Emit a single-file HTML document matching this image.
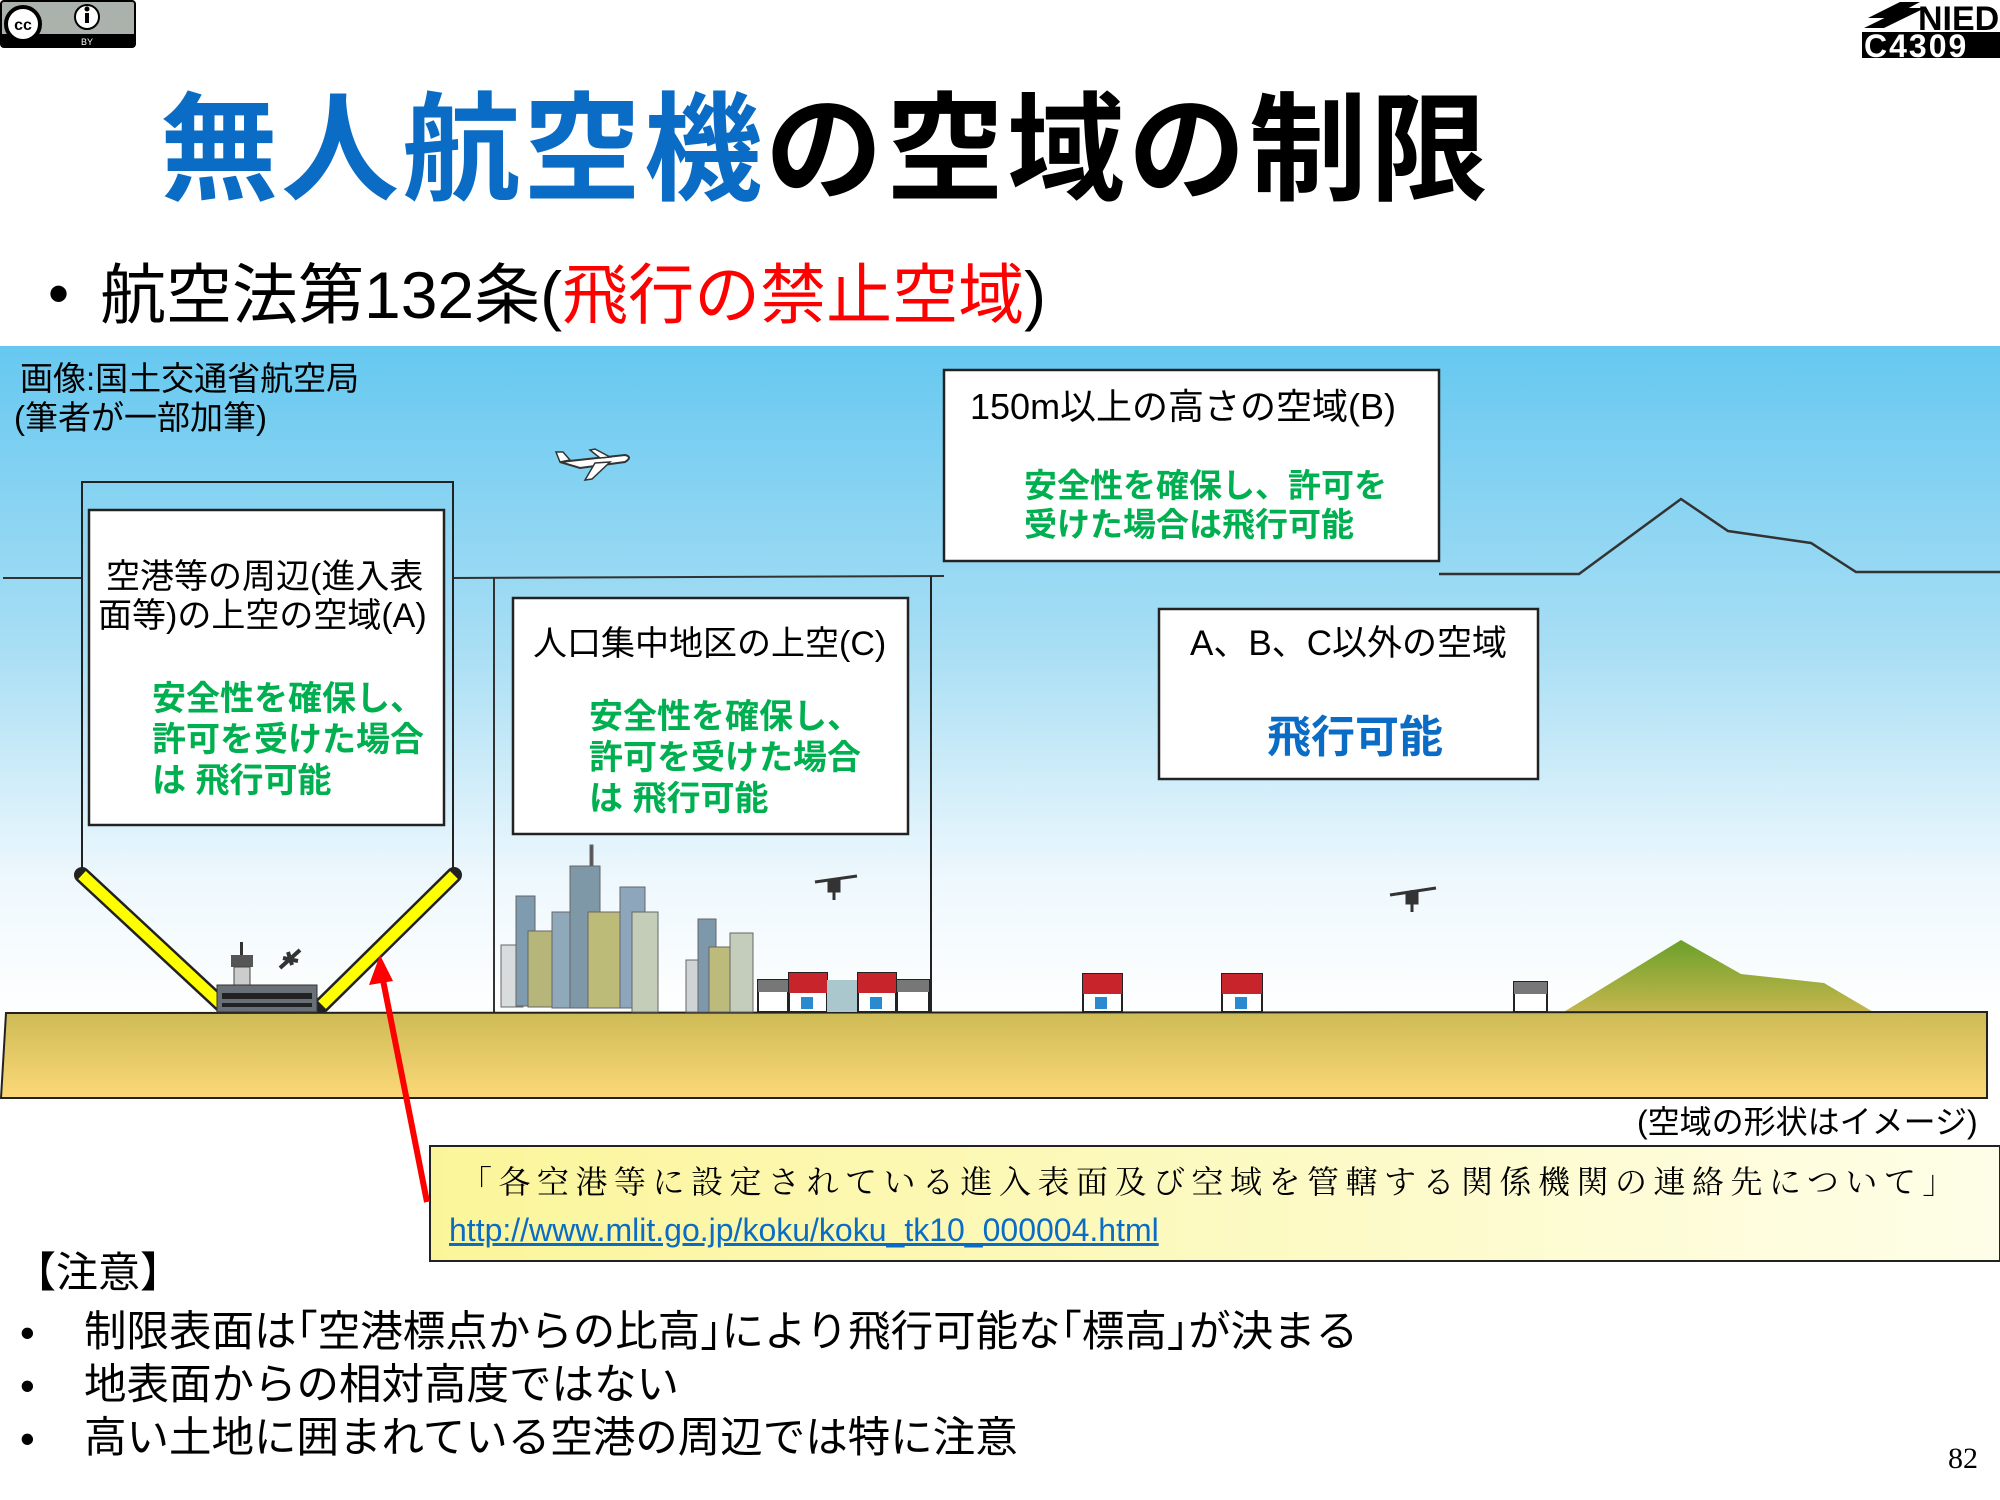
<!DOCTYPE html>
<html><head><meta charset="utf-8">
<style>
*{margin:0;padding:0;box-sizing:border-box}
body{width:2000px;height:1500px;position:relative;background:#fff;overflow:hidden;font-family:"Liberation Sans","Noto Sans CJK JP",sans-serif;color:#000}
.t{position:absolute;white-space:nowrap;line-height:1}
.g{color:#00b050;font-weight:bold}
</style></head><body>
<svg width="2000" height="1500" style="position:absolute;left:0;top:0">
<defs>
<linearGradient id="sky" x1="0" y1="0" x2="0" y2="1">
<stop offset="0" stop-color="#66c8f0"/><stop offset="0.45" stop-color="#a8def4"/><stop offset="0.8" stop-color="#eef8fd"/><stop offset="1" stop-color="#ffffff"/></linearGradient>
<linearGradient id="gr" x1="0" y1="0" x2="0" y2="1"><stop offset="0" stop-color="#cdbb55"/><stop offset="1" stop-color="#fcd878"/></linearGradient>
<linearGradient id="mt" x1="0" y1="0" x2="0" y2="1"><stop offset="0" stop-color="#6aa02a"/><stop offset="1" stop-color="#c7b64e"/></linearGradient>
<linearGradient id="yb" x1="0" y1="0" x2="1" y2="0"><stop offset="0" stop-color="#fbf59a"/><stop offset="1" stop-color="#fefee8"/></linearGradient>
</defs>
<rect x="0" y="346" width="2000" height="668" fill="url(#sky)"/>
<rect x="1" y="1" width="134" height="46" rx="3" fill="#aab2ab" stroke="#000" stroke-width="2"/>
<rect x="1" y="34" width="134" height="13" fill="#000"/>
<circle cx="23" cy="24" r="17" fill="#fff" stroke="#000" stroke-width="4"/>
<text x="23" y="30" font-size="16" font-weight="bold" text-anchor="middle" font-family="Liberation Sans">cc</text>
<circle cx="87" cy="17" r="12" fill="#fff" stroke="#000" stroke-width="2"/>
<rect x="85" y="13" width="4" height="10" fill="#000"/><circle cx="87" cy="9" r="2.5" fill="#000"/>
<text x="87" y="45" font-size="9" fill="#fff" text-anchor="middle" font-family="Liberation Sans">BY</text>
<path d="M1868 18 L1900 2 L1920 2 L1890 18Z M1864 28 L1905 8 L1925 8 L1884 28Z" fill="#000"/>
<text x="1918" y="30" font-size="34" font-weight="bold" font-family="Liberation Sans">NIED</text>
<rect x="1862" y="32" width="138" height="26" fill="#000"/>
<text x="1864" y="57" font-size="32" font-weight="bold" fill="#fff" font-family="Liberation Sans" letter-spacing="2">C4309</text>
<polyline points="3,578 82,578" stroke="#333" stroke-width="2" fill="none"/>
<polyline points="453,578 944,576" stroke="#333" stroke-width="2" fill="none"/>
<polyline points="1439,574 1579,574 1681,499 1728,531 1811,543 1856,572 2000,572" stroke="#333" stroke-width="2.5" fill="none"/>
<polyline points="82,870 82,482 453,482 453,870" stroke="#222" stroke-width="2" fill="none"/>
<rect x="89" y="510" width="355" height="315" fill="#fff" stroke="#222" stroke-width="2.5"/>
<line x1="82" y1="875" x2="222" y2="1005" stroke="#222" stroke-width="16" stroke-linecap="round"/>
<line x1="82" y1="875" x2="222" y2="1005" stroke="#ffff00" stroke-width="11"/>
<line x1="454" y1="875" x2="322" y2="1005" stroke="#222" stroke-width="16" stroke-linecap="round"/>
<line x1="454" y1="875" x2="322" y2="1005" stroke="#ffff00" stroke-width="11"/>
<line x1="494" y1="578" x2="494" y2="1012" stroke="#333" stroke-width="2"/>
<line x1="931" y1="576" x2="931" y2="1012" stroke="#222" stroke-width="2"/>
<rect x="513" y="598" width="395" height="236" fill="#fff" stroke="#222" stroke-width="2.5"/>
<rect x="944" y="370" width="495" height="191" fill="#fff" stroke="#222" stroke-width="2.5"/>
<rect x="1159" y="609" width="379" height="170" fill="#fff" stroke="#222" stroke-width="2.5"/>
<polygon points="1562,1013 1681,940 1741,974 1824,983 1875,1013" fill="url(#mt)"/>
<polygon points="6,1013 1987,1012 1987,1098 1,1098" fill="url(#gr)" stroke="#222" stroke-width="2"/>
<g stroke="#666" stroke-width="1">
<rect x="501" y="945" width="22" height="62" fill="#d8dcdc"/>
<rect x="516" y="896" width="19" height="110" fill="#7e9bb0"/>
<rect x="528" y="931" width="25" height="76" fill="#b7b67a"/>
<rect x="552" y="912" width="28" height="96" fill="#8fa8ba"/>
<rect x="590" y="845" width="3" height="25" fill="#555"/>
<rect x="570" y="866" width="30" height="142" fill="#7f98a8"/>
<rect x="588" y="912" width="32" height="96" fill="#bdbb78"/>
<rect x="620" y="887" width="25" height="121" fill="#8ea6bc"/>
<rect x="632" y="912" width="26" height="100" fill="#c4cdb8"/>
<rect x="686" y="960" width="20" height="52" fill="#cfd3d3"/>
<rect x="698" y="919" width="18" height="93" fill="#7d98ab"/>
<rect x="709" y="947" width="21" height="65" fill="#bcbb7c"/>
<rect x="730" y="933" width="23" height="79" fill="#c4ccbb"/>
</g>
<g>
<rect x="758" y="980" width="30" height="32" fill="#fff" stroke="#222" stroke-width="2"/><rect x="758" y="980" width="30" height="12" fill="#777"/>
<rect x="789" y="973" width="38" height="39" fill="#fff" stroke="#222" stroke-width="2"/><rect x="789" y="973" width="38" height="20" fill="#c8242c"/><rect x="801" y="997" width="12" height="12" fill="#2a8ad0"/>
<rect x="827" y="980" width="31" height="32" fill="#a9c7cc"/>
<rect x="858" y="973" width="38" height="39" fill="#fff" stroke="#222" stroke-width="2"/><rect x="858" y="973" width="38" height="20" fill="#c8242c"/><rect x="870" y="997" width="12" height="12" fill="#2a8ad0"/>
<rect x="897" y="980" width="32" height="32" fill="#fff" stroke="#222" stroke-width="2"/><rect x="897" y="980" width="32" height="12" fill="#777"/>
<rect x="1083" y="974" width="39" height="38" fill="#fff" stroke="#222" stroke-width="2"/><rect x="1083" y="974" width="39" height="20" fill="#c8242c"/><rect x="1095" y="997" width="12" height="12" fill="#2a8ad0"/>
<rect x="1222" y="974" width="40" height="38" fill="#fff" stroke="#222" stroke-width="2"/><rect x="1222" y="974" width="40" height="20" fill="#c8242c"/><rect x="1235" y="997" width="12" height="12" fill="#2a8ad0"/>
<rect x="1514" y="982" width="33" height="30" fill="#fff" stroke="#222" stroke-width="2"/><rect x="1514" y="982" width="33" height="12" fill="#777"/>
</g>
<rect x="240" y="942" width="3" height="14" fill="#333"/>
<rect x="231" y="955" width="22" height="12" fill="#555"/>
<rect x="234" y="967" width="16" height="24" fill="#ccc" stroke="#444"/>
<rect x="217" y="985" width="100" height="27" fill="#6a7078" stroke="#333"/>
<rect x="222" y="993" width="90" height="6" fill="#222"/>
<rect x="222" y="1003" width="90" height="4" fill="#222"/>
<path d="M280 968 L300 950 M288 952 L292 965 M283 958 L298 961" stroke="#333" stroke-width="4"/>
<path d="M560 462 L625 455 Q633 457 625 462 L580 468 Z" fill="#fff" stroke="#333" stroke-width="2"/>
<path d="M595 463 L585 480 L592 479 L610 462 Z M600 458 L590 450 L595 449 L610 457Z M560 462 L556 452 L563 452 L570 460Z" fill="#fff" stroke="#333" stroke-width="1.5"/>
<g stroke="#333" stroke-width="3"><line x1="815" y1="882" x2="857" y2="876"/><line x1="834" y1="878" x2="834" y2="900"/><rect x="829" y="881" width="10" height="10" fill="#333"/></g>
<g stroke="#333" stroke-width="3"><line x1="1390" y1="895" x2="1436" y2="888"/><line x1="1412" y1="890" x2="1412" y2="912"/><rect x="1407" y="893" width="10" height="10" fill="#333"/></g>
<rect x="430" y="1146" width="1570" height="115" fill="url(#yb)" stroke="#222" stroke-width="2"/>
<line x1="427" y1="1202" x2="382" y2="975" stroke="#ff0000" stroke-width="6"/>
<polygon points="380,955 369,985 393,981" fill="#ff0000"/>
</svg>

<div class="t" style="left:160px;top:92px;font-size:118px;font-weight:bold;letter-spacing:3px"><span style="color:#0a6cc4">無人航空機</span>の空域の制限</div>
<div class="t" style="left:48px;top:264px;font-size:60px">•</div>
<div class="t" style="left:100px;top:262px;font-size:66px">航空法第132条(<span style="color:#ff0000">飛行の禁止空域</span>)</div>

<div class="t" style="left:20px;top:362px;font-size:33px">画像:国土交通省航空局</div>
<div class="t" style="left:14px;top:401px;font-size:33px">(筆者が一部加筆)</div>

<div class="t" style="left:106px;top:560px;font-size:34px">空港等の周辺(進入表</div>
<div class="t" style="left:98px;top:599px;font-size:34px">面等)の上空の空域(A)</div>
<div class="t g" style="left:152px;top:679px;font-size:34px;line-height:41px">安全性を確保し、<br>許可を受けた場合<br>は 飛行可能</div>

<div class="t" style="left:533px;top:627px;font-size:34px">人口集中地区の上空(C)</div>
<div class="t g" style="left:589px;top:697px;font-size:34px;line-height:41px">安全性を確保し、<br>許可を受けた場合<br>は 飛行可能</div>

<div class="t" style="left:970px;top:389px;font-size:36px">150m以上の高さの空域(B)</div>
<div class="t g" style="left:1024px;top:466px;font-size:33px;line-height:39px">安全性を確保し、許可を<br>受けた場合は飛行可能</div>

<div class="t" style="left:1190px;top:626px;font-size:35px">A、B、C以外の空域</div>
<div class="t" style="left:1267px;top:716px;font-size:44px;color:#0a6cc4;font-weight:bold">飛行可能</div>

<div class="t" style="left:1637px;top:1106px;font-size:32px">(空域の形状はイメージ)</div>

<div class="t" style="left:460px;top:1166px;font-size:32px;letter-spacing:6.5px;font-family:'Liberation Serif','Noto Serif CJK SC',serif">「各空港等に設定されている進入表面及び空域を管轄する関係機関の連絡先について」</div>
<div class="t" style="left:449px;top:1214px;font-size:32px;color:#0a6cc4;text-decoration:underline">http://www.mlit.go.jp/koku/koku_tk10_000004.html</div>

<div class="t" style="left:14px;top:1252px;font-size:42px">【注意】</div>
<div class="t" style="left:20px;top:1306px;font-size:42px;line-height:53px">•<br>•<br>•</div>
<div class="t" style="left:84px;top:1306px;font-size:42.5px;line-height:53px">制限表面は｢空港標点からの比高｣により飛行可能な｢標高｣が決まる<br>地表面からの相対高度ではない<br>高い土地に囲まれている空港の周辺では特に注意</div>
<div class="t" style="left:1948px;top:1444px;font-size:30px;font-family:'Liberation Serif',serif">82</div>
</body></html>
